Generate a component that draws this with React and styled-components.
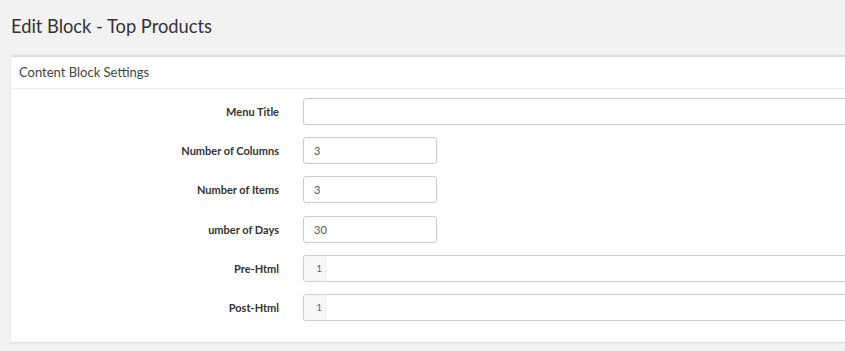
import styled, { createGlobalStyle } from 'styled-components';

const GlobalStyle = createGlobalStyle`
  html, body {
    margin: 0;
    padding: 0;
    background: #f2f2f2;
    overflow: hidden;
  }
  body {
    font-family: Lato, "Liberation Sans", sans-serif;
    color: #333;
  }
`;

const fields = [
  { label: 'Menu Title', type: 'wide', value: '' },
  { label: 'Number of Columns', type: 'short', value: '3' },
  { label: 'Number of Items', type: 'short', value: '3', tint: true },
  { label: 'umber of Days', type: 'short', value: '30' },
  { label: 'Pre-Html', type: 'code' },
  { label: 'Post-Html', type: 'code' },
];

const App = () => {
  return (
    <Page>
      <GlobalStyle />
      <Title>Edit Block - Top Products</Title>
      <Panel>
        <PanelHeader>Content Block Settings</PanelHeader>
        <Form>
          {fields.map((f) => (
            <Row key={f.label}>
              <Label>{f.label}</Label>
              {f.type === 'code' ? (
                <CodeBox>
                  <Gutter>1</Gutter>
                  <CodeArea />
                </CodeBox>
              ) : (
                <Input $short={f.type === 'short'} $tint={f.tint}>
                  {f.value}
                </Input>
              )}
            </Row>
          ))}
        </Form>
      </Panel>
    </Page>
  );
};

const Page = styled.div`
  width: 1100px;
  padding: 0 0 10px 11px;
`;

const Title = styled.h1`
  margin: 0;
  height: 55px;
  line-height: 52px;
  font-size: 18.3px;
  font-weight: 400;
  color: #333;
`;

const Panel = styled.section`
  background: #fff;
  border-top: 2px solid #dedede;
  box-shadow: 0 1px 2px rgba(0, 0, 0, 0.1);
`;

const PanelHeader = styled.div`
  height: 31px;
  line-height: 31px;
  padding: 0 8px;
  font-size: 13px;
  color: #444;
  border-bottom: 1px solid #eee;
`;

const Form = styled.div`
  padding: 9px 0 9px;
`;

const Row = styled.div`
  display: grid;
  grid-template-columns: 268px 1fr;
  column-gap: 24px;
  align-items: center;
  margin-bottom: 12.2px;
`;

const Label = styled.label`
  text-align: right;
  font-size: 11px;
  font-weight: 700;
  color: #333;
`;

const Input = styled.div`
  box-sizing: border-box;
  height: 27px;
  width: ${(p) => (p.$short ? '134px' : '100%')};
  border: 1px solid #ccc;
  border-radius: 3px;
  padding: 0 10px;
  line-height: 25px;
  font-size: 11px;
  color: ${(p) => (p.$tint ? '#3a5a78' : '#555')};
`;

const CodeBox = styled.div`
  box-sizing: border-box;
  display: flex;
  height: 27px;
  border: 1px solid #ccc;
  border-radius: 3px;
  overflow: hidden;
`;

const Gutter = styled.div`
  width: 22px;
  padding-right: 3px;
  box-sizing: border-box;
  background: #f7f7f7;
  border-right: 1px solid #eee;
  text-align: right;
  font-size: 10px;
  line-height: 25px;
  color: #666;
`;

const CodeArea = styled.div`
  flex: 1;
`;

export default App;
